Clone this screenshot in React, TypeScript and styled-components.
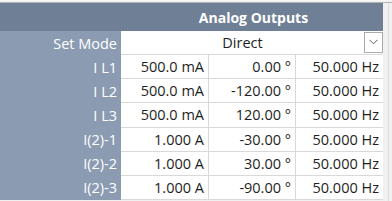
import React from 'react';
import styled, {createGlobalStyle} from 'styled-components';

const GlobalStyle = createGlobalStyle`
    html, body {
        margin: 0;
        padding: 0;
        background: #f0f0f0;
    }
`;

type Row = {
    label: string;
    amplitude: string;
    phase: string;
    frequency: string;
};

const rows: Row[] = [
    {label: 'I L1', amplitude: '500.0 mA', phase: '0.00 °', frequency: '50.000 Hz'},
    {label: 'I L2', amplitude: '500.0 mA', phase: '-120.00 °', frequency: '50.000 Hz'},
    {label: 'I L3', amplitude: '500.0 mA', phase: '120.00 °', frequency: '50.000 Hz'},
    {label: 'I(2)-1', amplitude: '1.000 A', phase: '-30.00 °', frequency: '50.000 Hz'},
    {label: 'I(2)-2', amplitude: '1.000 A', phase: '30.00 °', frequency: '50.000 Hz'},
    {label: 'I(2)-3', amplitude: '1.000 A', phase: '-90.00 °', frequency: '50.000 Hz'},
];

const ChevronDown = () => (
    <svg width="9" height="6" viewBox="0 0 9 6" fill="none">
        <path d="M0.5 0.8 L4.5 4.8 L8.5 0.8" stroke="#5a5a5a" strokeWidth="1"/>
    </svg>
);

export default function App() {
    return (
        <Page>
            <GlobalStyle/>
            <Table>
                <HeaderSpacer/>
                <HeaderTitle>{'Analog Outputs'}</HeaderTitle>

                <Label>{'Set Mode'}</Label>
                <ModeCell>
                    <ModeText>{'Direct'}</ModeText>
                    <DropButton>
                        <ChevronDown/>
                    </DropButton>
                </ModeCell>

                {rows.map((row) => (
                    <React.Fragment key={row.label}>
                        <Label>{row.label}</Label>
                        <Cell>{row.amplitude}</Cell>
                        <Cell>{row.phase}</Cell>
                        <Cell $last={true}>{row.frequency}</Cell>
                    </React.Fragment>
                ))}
            </Table>
            <Gutter/>
        </Page>
    );
}

const Page = styled.div`
    display: flex;
    width: 392px;
    height: 201px;
    padding-top: 2px;
    box-sizing: border-box;
    border-top: 1px solid #f7f7f7;
    background: #f0f0f0;
    font-family: "Open Sans", "Noto Sans", sans-serif;
    font-size: 14.5px;
    position: relative;

    &::before {
        content: '';
        position: absolute;
        left: 0;
        right: 0;
        top: 1px;
        height: 1px;
        background: #b4b4b4;
    }
`;

const Table = styled.div`
    display: grid;
    grid-template-columns: 121px 88px 87px 87px;
    grid-template-rows: 28px repeat(7, 24.15px);
    width: 383px;
    align-self: flex-start;
`;

const HeaderSpacer = styled.div`
    background: #6f7f95;
`;

const HeaderTitle = styled.div`
    grid-column: 2 / span 3;
    background: #6f7f95;
    color: #ffffff;
    font-weight: 700;
    font-size: 14px;
    display: flex;
    align-items: center;
    justify-content: center;
    padding-left: 3px;
`;

const Label = styled.div`
    background: #8b9bb1;
    color: #ffffff;
    display: flex;
    align-items: center;
    justify-content: flex-end;
    padding-right: 4px;
    box-sizing: border-box;
`;

const Cell = styled.div<{ $last?: boolean }>`
    background: #ffffff;
    color: #1e1e1e;
    display: flex;
    align-items: center;
    justify-content: flex-end;
    padding-right: 4px;
    box-sizing: border-box;
    border-bottom: 1px solid #d9d9d9;
    border-right: ${(p) => (p.$last ? 'none' : '1px solid #d9d9d9')};
    white-space: nowrap;
`;

const ModeCell = styled.div`
    grid-column: 2 / span 3;
    background: #ffffff;
    display: flex;
    align-items: center;
    border-bottom: 1px solid #d9d9d9;
    box-sizing: border-box;
`;

const ModeText = styled.div`
    flex: 1;
    text-align: center;
    color: #1e1e1e;
`;

const DropButton = styled.div`
    width: 19px;
    height: 21px;
    box-sizing: border-box;
    border: 1px solid #ababab;
    background: #ffffff;
    display: flex;
    align-items: center;
    justify-content: center;
    margin-bottom: 1px;
`;

const Gutter = styled.div`
    width: 5px;
    border-right: 1px solid #dedede;
    align-self: stretch;
`;
